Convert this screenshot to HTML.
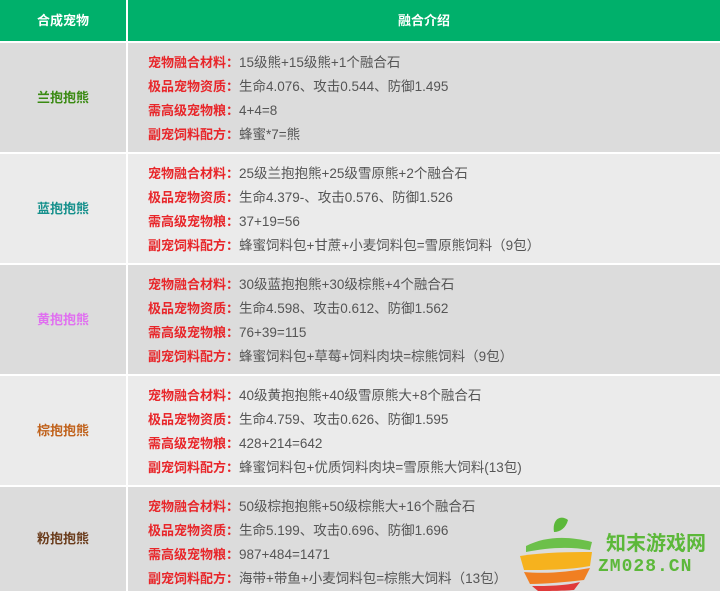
<!DOCTYPE html><html><head><meta charset="utf-8"><style>
*{margin:0;padding:0;box-sizing:border-box}
body{width:720px;height:591px;overflow:hidden;background:#fff;font-family:"Liberation Sans","Noto Sans CJK SC",sans-serif;font-size:13.5px;color:#555}
.hd{position:absolute;top:0;height:41px;background:#00b06b;color:#fff;font-weight:bold;font-size:13px;line-height:41px;text-align:center}
.c{position:absolute}
.l{left:0;width:126px;text-align:center;font-weight:bold;font-size:13px}
.r{left:128px;width:592px;padding:8px 0 0 20px}
.r div{height:24px;line-height:24px;white-space:nowrap}
.r b{color:#e8262a;font-weight:bold;font-size:13px}
</style></head><body>
<div class="hd" style="left:0;width:126px">合成宠物</div>
<div class="hd" style="left:128px;width:592px">融合介绍</div>

<div class="c l" style="top:43px;height:109px;line-height:109px;background:#dcdcdc;color:#3a8a12">兰抱抱熊</div>
<div class="c r" style="top:43px;height:109px;background:#dcdcdc">
<div><b>宠物融合材料：</b>15级熊+15级熊+1个融合石</div>
<div><b>极品宠物资质：</b>生命4.076、攻击0.544、防御1.495</div>
<div><b>需高级宠物粮：</b>4+4=8</div>
<div><b>副宠饲料配方：</b>蜂蜜*7=熊</div></div>

<div class="c l" style="top:154px;height:109px;line-height:109px;background:#ebebeb;color:#16908c">蓝抱抱熊</div>
<div class="c r" style="top:154px;height:109px;background:#ebebeb">
<div><b>宠物融合材料：</b>25级兰抱抱熊+25级雪原熊+2个融合石</div>
<div><b>极品宠物资质：</b>生命4.379-、攻击0.576、防御1.526</div>
<div><b>需高级宠物粮：</b>37+19=56</div>
<div><b>副宠饲料配方：</b>蜂蜜饲料包+甘蔗+小麦饲料包=雪原熊饲料（9包）</div></div>

<div class="c l" style="top:265px;height:109px;line-height:109px;background:#dcdcdc;color:#e070f0">黄抱抱熊</div>
<div class="c r" style="top:265px;height:109px;background:#dcdcdc">
<div><b>宠物融合材料：</b>30级蓝抱抱熊+30级棕熊+4个融合石</div>
<div><b>极品宠物资质：</b>生命4.598、攻击0.612、防御1.562</div>
<div><b>需高级宠物粮：</b>76+39=115</div>
<div><b>副宠饲料配方：</b>蜂蜜饲料包+草莓+饲料肉块=棕熊饲料（9包）</div></div>

<div class="c l" style="top:376px;height:109px;line-height:109px;background:#ebebeb;color:#c0621c">棕抱抱熊</div>
<div class="c r" style="top:376px;height:109px;background:#ebebeb">
<div><b>宠物融合材料：</b>40级黄抱抱熊+40级雪原熊大+8个融合石</div>
<div><b>极品宠物资质：</b>生命4.759、攻击0.626、防御1.595</div>
<div><b>需高级宠物粮：</b>428+214=642</div>
<div><b>副宠饲料配方：</b>蜂蜜饲料包+优质饲料肉块=雪原熊大饲料(13包)</div></div>

<div class="c l" style="top:487px;height:104px;line-height:104px;background:#dcdcdc;color:#6a3c1c">粉抱抱熊</div>
<div class="c r" style="top:487px;height:104px;background:#dcdcdc">
<div><b>宠物融合材料：</b>50级棕抱抱熊+50级棕熊大+16个融合石</div>
<div><b>极品宠物资质：</b>生命5.199、攻击0.696、防御1.696</div>
<div><b>需高级宠物粮：</b>987+484=1471</div>
<div><b>副宠饲料配方：</b>海带+带鱼+小麦饲料包=棕熊大饲料（13包）</div></div>

<svg class="c" style="left:518px;top:502px" width="76" height="89" viewBox="0 0 76 89">
<path d="M36 30 C34 18 42 12 50 18 C48 26 42 30 36 30Z" fill="#5cb83a"/>
<path d="M8 44 C28 34 50 34 74 40 L72 48 C50 44 28 46 8 50Z" fill="#6cc04a"/>
<path d="M2 54 C28 50 52 50 74 50 L72 64 C50 68 28 68 6 68Z" fill="#f6b21e"/>
<path d="M6 70 C28 72 50 70 72 66 L66 78 C48 80 28 82 12 82Z" fill="#f07f22"/>
<path d="M14 84 C30 84 46 84 62 80 L56 88 C44 89 28 89 20 89Z" fill="#e03a3a"/>
</svg>
<div class="c" style="left:606px;top:527px;color:#5cb83a;font-size:20px;font-weight:bold">知末游戏网</div>
<div class="c" style="left:598px;top:557px;color:#5cb83a;font-size:18px;font-weight:bold;font-family:'Liberation Mono',monospace;letter-spacing:1px">ZM028.CN</div>
</body></html>
